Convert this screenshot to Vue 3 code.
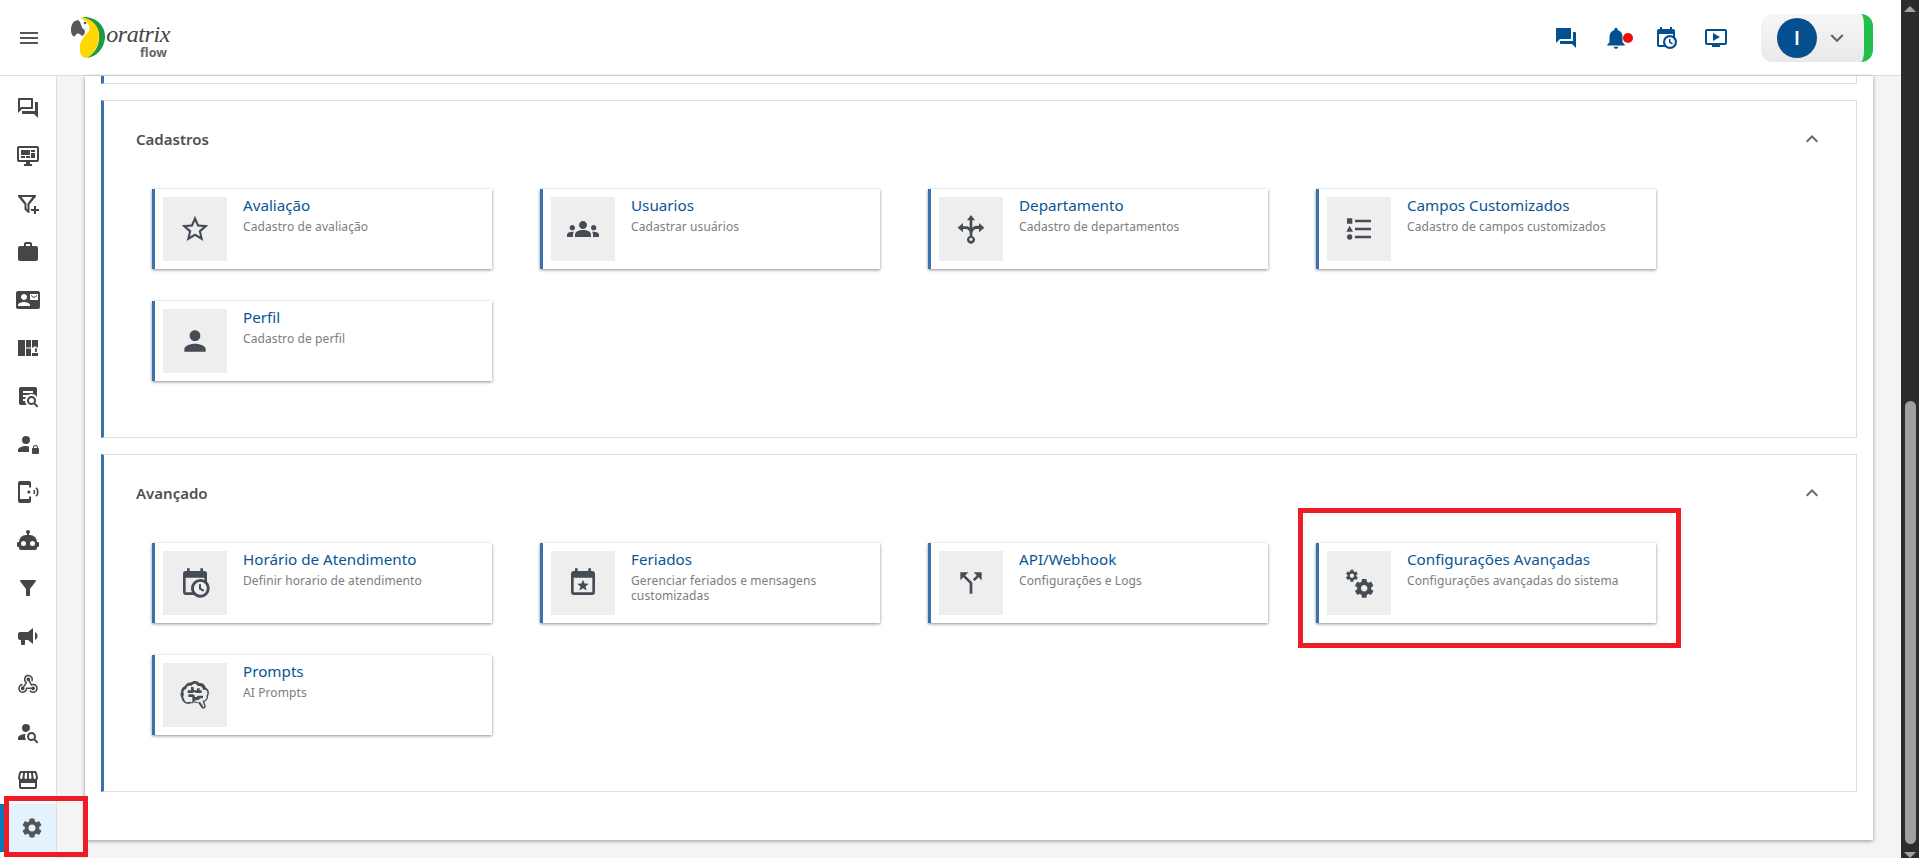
<script setup>
const P = {
  menu: 'M3 18h18v-2H3v2zm0-5h18v-2H3v2zm0-7v2h18V6H3z',
  qaOut: 'M15 4v7H5.17l-.59.59-.58.58V4h11m1-2H3c-.55 0-1 .45-1 1v14l4-4h10c.55 0 1-.45 1-1V3c0-.55-.45-1-1-1zm5 4h-2v9H6v2c0 .55.45 1 1 1h11l4 4V7c0-.55-.45-1-1-1z',
  qa: 'M21 6h-2v9H6v2c0 .55.45 1 1 1h11l4 4V7c0-.55-.45-1-1-1zm-4 6V3c0-.55-.45-1-1-1H3c-.55 0-1 .45-1 1v14l4-4h10c.55 0 1-.45 1-1z',
  monitor: 'M21,16V4H3V16H21M21,2A2,2 0 0,1 23,4V16A2,2 0 0,1 21,18H14V20H16V22H8V20H10V18H3C1.89,18 1,17.1 1,16V4C1,2.89 1.89,2 3,2H21M5,6H14V11H5V6M15,6H19V8H15V6M19,9V14H15V9H19M5,12H9V14H5V12M10,12H14V14H10V12Z',
  filterPlus: 'M2 3h18v1.6L13.5 12.4V21l-1.6-.2-3.4-3.4V12.4L2 4.6V3zm3.6 2 4.9 6.4v5.2l1 1v-6.2L16.4 5H5.6zM15 17h3v-3h2v3h3v2h-3v3h-2v-3h-3v-2z',
  work: 'M20 6h-4V4c0-1.11-.89-2-2-2h-4c-1.11 0-2 .89-2 2v2H4c-1.11 0-1.99.89-1.99 2L2 19c0 1.11.89 2 2 2h16c1.11 0 2-.89 2-2V8c0-1.11-.89-2-2-2zm-6 0h-4V4h4v2z',
  contact: 'M21 8V7l-3 2-3-2v1l3 2 3-2zm1-5H2C.9 3 0 3.9 0 5v14c0 1.1.9 2 2 2h20c1.1 0 1.99-.9 1.99-2L24 5c0-1.1-.9-2-2-2zM8 6c1.66 0 3 1.34 3 3s-1.34 3-3 3-3-1.34-3-3 1.34-3 3-3zm6 12H2v-1c0-2 4-3.1 6-3.1s6 1.1 6 3.1v1zm8-6h-8V6h8v6z',
  quilt: 'M2 4h7v16H2V4zm8 0h5v7.5h-5V4zm6 0h6v7.5h-1.5l-.2-1h-2.6l-.2 1H16V4zm-6 8.5h5V20h-5v-7.5zm8.9 0h2.2l-.3 3.5h-1.6l-.3-3.5zM16 17h6v3h-6v-3z',
  docSearch: 'M15.5,12C18,12 20,14 20,16.5C20,17.38 19.75,18.21 19.31,18.9L22.39,22L21,23.39L17.88,20.32C17.19,20.75 16.37,21 15.5,21C13,21 11,19 11,16.5C11,14 13,12 15.5,12M15.5,14A2.5,2.5 0 0,0 13,16.5A2.5,2.5 0 0,0 15.5,19A2.5,2.5 0 0,0 18,16.5A2.5,2.5 0 0,0 15.5,14M7,15V17H9C9.14,18.55 9.8,19.94 10.81,21H5C3.89,21 3,20.1 3,19V5C3,3.89 3.89,3 5,3H19A2,2 0 0,1 21,5V13.03C19.85,11.21 17.82,10 15.5,10C14.23,10 13.04,10.37 12.04,11H7V13H10C9.64,13.6 9.34,14.28 9.17,15H7M17,9V7H7V9H17Z',
  accLock: 'M10 4a4 4 0 1 1 0 8 4 4 0 0 1 0-8zM10 14c-4.42 0-8 1.79-8 4v2h11v-5.5c-.9-.3-1.9-.5-3-.5zM22 16v-.5a2.5 2.5 0 0 0-5 0v.5c-.55 0-1 .45-1 1v4c0 .55.45 1 1 1h5c.55 0 1-.45 1-1v-4c0-.55-.45-1-1-1zm-1 0h-3v-.5a1.5 1.5 0 0 1 3 0v.5z',
  phone: 'M20.6 7.2l-1.1 1.1c2 2 2 5.3 0 7.4l1.1 1.1c2.7-2.6 2.7-7 0-9.6zM18.2 9.6l-1.1 1.1c.7.7.7 1.9 0 2.6l1.1 1.1c1.4-1.3 1.4-3.5 0-4.8zM14.5 12a1.6 1.6 0 1 1-3.2 0 1.6 1.6 0 0 1 3.2 0zM13 1H4C2.9 1 2 1.9 2 3v18c0 1.1.9 2 2 2h9c1.1 0 2-.9 2-2v-4.5h-2V19H4V5h9v2.5h2V3c0-1.1-.9-2-2-2z',
  robot: 'M12,2A2,2 0 0,1 14,4C14,4.74 13.6,5.39 13,5.73V7H14A7,7 0 0,1 21,14H22A1,1 0 0,1 23,15V18A1,1 0 0,1 22,19H21V20A2,2 0 0,1 19,22H5A2,2 0 0,1 3,20V19H2A1,1 0 0,1 1,18V15A1,1 0 0,1 2,14H3A7,7 0 0,1 10,7H11V5.73C10.4,5.39 10,4.74 10,4A2,2 0 0,1 12,2M7.5,13A2.5,2.5 0 0,0 5,15.5A2.5,2.5 0 0,0 7.5,18A2.5,2.5 0 0,0 10,15.5A2.5,2.5 0 0,0 7.5,13M16.5,13A2.5,2.5 0 0,0 14,15.5A2.5,2.5 0 0,0 16.5,18A2.5,2.5 0 0,0 19,15.5A2.5,2.5 0 0,0 16.5,13Z',
  filter: 'M4.25 5.61C6.27 8.2 10 13 10 13v6c0 .55.45 1 1 1h2c.55 0 1-.45 1-1v-6s3.72-4.8 5.74-7.39c.51-.66.04-1.61-.79-1.61H5.04c-.83 0-1.3.95-.79 1.61z',
  bullhorn: 'M12,8H4A2,2 0 0,0 2,10V14A2,2 0 0,0 4,16H5V20A1,1 0 0,0 6,21H8A1,1 0 0,0 9,20V16H12L17,20V4L12,8M21.5,12C21.5,13.71 20.54,15.26 19,16V8C20.53,8.75 21.5,10.3 21.5,12Z',
  webhook: 'M10.46,19C9,21.07 6.15,21.59 4.09,20.15C2.04,18.71 1.56,15.84 3,13.75C3.87,12.5 5.21,11.83 6.58,11.77L6.63,13.2C5.72,13.27 4.84,13.74 4.27,14.56C3.27,16 3.58,17.94 4.95,18.91C6.33,19.87 8.26,19.5 9.26,18.07C9.57,17.62 9.75,17.13 9.82,16.63V15.62L15.4,15.58L15.47,15.47C16,14.55 17.15,14.23 18.05,14.75C18.95,15.27 19.26,16.43 18.73,17.35C18.2,18.26 17.04,18.58 16.14,18.06C15.73,17.83 15.44,17.46 15.31,17.04L11.24,17.06C11.13,17.73 10.87,18.39 10.46,19M17.74,11.86C20.27,12.17 22.07,14.44 21.76,16.93C21.45,19.43 19.15,21.2 16.62,20.89C15.13,20.71 13.9,19.86 13.19,18.68L14.43,17.96C14.92,18.73 15.75,19.28 16.75,19.41C18.5,19.62 20.05,18.43 20.26,16.76C20.47,15.09 19.23,13.56 17.5,13.35C16.96,13.29 16.44,13.36 15.97,13.53L15.12,13.97L12.54,9.2H12.32C11.26,9.16 10.44,8.29 10.47,7.25C10.5,6.21 11.4,5.4 12.45,5.44C13.5,5.5 14.32,6.37 14.28,7.41C14.26,7.85 14.09,8.25 13.82,8.56L15.71,12.05C16.31,11.85 17,11.79 17.74,11.86M8.25,9.14C7.25,6.79 8.31,4.1 10.62,3.12C12.94,2.14 15.62,3.25 16.62,5.6C17.21,6.97 17.09,8.47 16.42,9.67L15.18,8.95C15.6,8.14 15.67,7.15 15.27,6.22C14.59,4.62 12.78,3.85 11.23,4.5C9.67,5.16 8.97,7 9.65,8.6C9.93,9.26 10.4,9.77 10.97,10.11L11.36,10.32L8.29,15.31C8.32,15.36 8.36,15.42 8.39,15.5C8.88,16.41 8.54,17.56 7.62,18.05C6.71,18.54 5.56,18.18 5.06,17.24C4.57,16.31 4.91,15.16 5.83,14.67C6.22,14.46 6.65,14.41 7.06,14.5L9.37,10.73C8.9,10.3 8.5,9.76 8.25,9.14Z',
  accSearch: 'M15.5,12C18,12 20,14 20,16.5C20,17.38 19.75,18.2 19.31,18.9L22.39,22L21,23.39L17.88,20.32C17.19,20.75 16.37,21 15.5,21C13,21 11,19 11,16.5C11,14 13,12 15.5,12M15.5,14A2.5,2.5 0 0,0 13,16.5A2.5,2.5 0 0,0 15.5,19A2.5,2.5 0 0,0 18,16.5A2.5,2.5 0 0,0 15.5,14M10,4A4,4 0 0,1 14,8C14,8.91 13.69,9.75 13.18,10.43C12.32,10.75 11.55,11.26 10.91,11.9L10,12A4,4 0 0,1 6,8A4,4 0 0,1 10,4M2,20V18C2,15.88 5.31,14.14 9.5,14C9.18,14.78 9,15.62 9,16.5C9,17.79 9.38,19 10,20H2Z',
  store: 'M21.9 8.89l-1.05-4.37c-.22-.9-1-1.52-1.91-1.52H5.05c-.9 0-1.69.63-1.9 1.52L2.1 8.89c-.24 1.02-.02 2.06.62 2.88.08.11.19.19.28.29V19c0 1.1.9 2 2 2h14c1.1 0 2-.9 2-2v-6.94c.09-.09.2-.18.28-.28.64-.82.87-1.87.62-2.89zm-2.99-3.9l1.05 4.37c.1.42.01.84-.25 1.17-.14.18-.44.47-.94.47-.61 0-1.14-.49-1.21-1.14L16.98 5l1.93-.01zM13 5h1.96l.54 4.52c.05.39-.07.78-.33 1.07-.22.26-.54.41-.95.41-.67 0-1.22-.59-1.22-1.31V5zM8.49 9.52L9.04 5H11v4.69c0 .72-.55 1.31-1.29 1.31-.34 0-.65-.15-.89-.41-.25-.29-.37-.68-.33-1.07zm-4.45-.16L5.05 5h1.97l-.58 4.86c-.08.65-.6 1.14-1.21 1.14-.49 0-.8-.29-.93-.47-.27-.32-.36-.75-.26-1.17zM5 15h14v4H5z',
  settings: 'M19.14 12.94c.04-.3.06-.61.06-.94 0-.32-.02-.64-.07-.94l2.03-1.58c.18-.14.23-.41.12-.61l-1.92-3.32c-.12-.22-.37-.29-.59-.22l-2.39.96c-.5-.38-1.03-.7-1.62-.94l-.36-2.54c-.04-.24-.24-.41-.48-.41h-3.84c-.24 0-.43.17-.47.41l-.36 2.54c-.59.24-1.13.57-1.62.94l-2.39-.96c-.22-.08-.47 0-.59.22L2.74 8.87c-.12.21-.08.47.12.61l2.03 1.58c-.05.3-.09.63-.09.94s.02.64.07.94l-2.03 1.58c-.18.14-.23.41-.12.61l1.92 3.32c.12.22.37.29.59.22l2.39-.96c.5.38 1.03.7 1.62.94l.36 2.54c.05.24.24.41.48.41h3.84c.24 0 .44-.17.47-.41l.36-2.54c.59-.24 1.13-.56 1.62-.94l2.39.96c.22.08.47 0 .59-.22l1.92-3.32c.12-.22.07-.47-.12-.61l-2.01-1.58zM12 15.6c-1.98 0-3.6-1.62-3.6-3.6s1.62-3.6 3.6-3.6 3.6 1.62 3.6 3.6-1.62 3.6-3.6 3.6z',
  star: 'M22 9.24l-7.19-.62L12 2 9.19 8.63 2 9.24l5.46 4.73L5.82 21 12 17.27 18.18 21l-1.63-7.03L22 9.24zM12 15.4l-3.76 2.27 1-4.28-3.32-2.88 4.38-.38L12 6.1l1.71 4.04 4.38.38-3.32 2.88 1 4.28L12 15.4z',
  groups: 'M12 12.75c1.63 0 3.07.39 4.24.9 1.08.48 1.76 1.56 1.76 2.73V18H6v-1.61c0-1.18.68-2.26 1.76-2.73 1.17-.52 2.61-.91 4.24-.91zM4 13c1.1 0 2-.9 2-2s-.9-2-2-2-2 .9-2 2 .9 2 2 2zm1.13 1.1c-.37-.06-.74-.1-1.13-.1-.99 0-1.93.21-2.78.58C.48 14.9 0 15.62 0 16.43V18h4.5v-1.61c0-.83.23-1.61.63-2.29zM20 13c1.1 0 2-.9 2-2s-.9-2-2-2-2 .9-2 2 .9 2 2 2zm4 3.43c0-.81-.48-1.53-1.22-1.85-.85-.37-1.79-.58-2.78-.58-.39 0-.76.04-1.13.1.4.68.63 1.46.63 2.29V18H24v-1.57zM12 6c1.66 0 3 1.34 3 3s-1.34 3-3 3-3-1.34-3-3 1.34-3 3-3z',
  person: 'M12 12c2.21 0 4-1.79 4-4s-1.79-4-4-4-4 1.79-4 4 1.79 4 4 4zm0 2c-2.67 0-8 1.34-8 4v2h16v-2c0-2.66-5.33-4-8-4z',
  arrows: 'M12 1.500l3 4h-2v5.700c.7-1 1.800-1.700 3.200-1.700H18V7.500l4 3.500-4 3.500v-2.500h-1.800c-1.800 0-3.200 1.500-3.200 3.500v1.700a3 3 0 1 1-2 0V15c0-1.700-1.300-3-3-3H6v2.500L2 11l4-3.500V10h2c1.100 0 2.200.4 3 1V5.500H9l3-4zm0 17a1.250 1.250 0 1 0 0 2.500 1.250 1.250 0 0 0 0-2.500z',
  typeList: 'M5,9.5L7.5,14H2.5L5,9.5M3,4H7V8H3V4M5,20A2,2 0 0,0 7,18A2,2 0 0,0 5,16A2,2 0 0,0 3,18A2,2 0 0,0 5,20M9,5V7H21V5H9M9,19H21V17H9V19M9,13H21V11H9V13Z',
  calClock: 'M15,13H16.5V15.82L18.94,17.23L18.19,18.53L15,16.69V13M19,8H5V19H9.67C9.24,18.09 9,17.07 9,16A7,7 0 0,1 16,9C17.07,9 18.09,9.24 19,9.67V8M5,21C3.89,21 3,20.1 3,19V5C3,3.89 3.89,3 5,3H6V1H8V3H16V1H18V3H19A2,2 0 0,1 21,5V11.1C22.24,12.36 23,14.09 23,16A7,7 0 0,1 16,23C14.09,23 12.36,22.24 11.1,21H5M16,11.15A4.85,4.85 0 0,0 11.15,16C11.15,18.68 13.32,20.85 16,20.85A4.85,4.85 0 0,0 20.85,16C20.85,13.32 18.68,11.15 16,11.15Z',
  calStar: 'M19 3h-1V1h-2v2H8V1H6v2H5c-1.100 0-2 .9-2 2v14c0 1.100.9 2 2 2h14c1.100 0 2-.9 2-2V5c0-1.100-.9-2-2-2zm0 16H5V8h14v11zM12 9.500l1.200 2.900 3.100.2-2.400 2 .8 3-2.700-1.600-2.700 1.600.8-3-2.400-2 3.100-.2z',
  split: 'M14 4l2.290 2.290-2.880 2.880 1.420 1.420 2.880-2.880L20 10V4zm-4 0H4v6l2.290-2.290 4.710 4.700V20h2v-8.410l-5.290-5.300z',
  cogs: 'M15.9,18.45C17.25,18.45 18.35,17.35 18.35,16C18.35,14.65 17.25,13.55 15.9,13.55C14.54,13.55 13.45,14.65 13.45,16C13.45,17.35 14.54,18.45 15.9,18.45M21.1,16.68L22.58,17.84C22.71,17.95 22.75,18.13 22.66,18.29L21.26,20.71C21.17,20.86 21,20.92 20.83,20.86L19.09,20.16C18.73,20.44 18.34,20.67 17.91,20.85L17.64,22.7C17.61,22.87 17.47,23 17.3,23H14.5C14.32,23 14.18,22.87 14.15,22.7L13.89,20.85C13.46,20.67 13.07,20.44 12.71,20.16L10.96,20.86C10.81,20.92 10.62,20.86 10.54,20.71L9.14,18.29C9.05,18.13 9.09,17.95 9.22,17.84L10.7,16.68L10.65,16L10.7,15.31L9.22,14.16C9.09,14.05 9.05,13.86 9.14,13.71L10.54,11.29C10.62,11.13 10.81,11.07 10.96,11.13L12.71,11.84C13.07,11.56 13.46,11.32 13.89,11.15L14.15,9.29C14.18,9.13 14.32,9 14.5,9H17.3C17.47,9 17.61,9.13 17.64,9.29L17.91,11.15C18.34,11.32 18.73,11.56 19.09,11.84L20.83,11.13C21,11.07 21.17,11.13 21.26,11.29L22.66,13.71C22.75,13.86 22.71,14.05 22.58,14.16L21.1,15.31L21.15,16L21.1,16.68M6.69,8.07C7.56,8.07 8.26,7.37 8.26,6.5C8.26,5.63 7.56,4.92 6.69,4.92A1.58,1.58 0 0,0 5.11,6.5C5.11,7.37 5.82,8.07 6.69,8.07M10.03,6.94L11,7.68C11.07,7.75 11.09,7.87 11.03,7.97L10.13,9.53C10.08,9.63 9.96,9.67 9.86,9.63L8.74,9.18L8,9.62L7.81,10.81C7.79,10.92 7.7,11 7.59,11H5.79C5.67,11 5.58,10.92 5.56,10.81L5.4,9.62L4.64,9.18L3.5,9.63C3.41,9.67 3.3,9.63 3.24,9.53L2.34,7.97C2.28,7.87 2.31,7.75 2.39,7.68L3.34,6.94L3.31,6.5L3.34,6.06L2.39,5.32C2.31,5.25 2.28,5.13 2.34,5.03L3.24,3.47C3.3,3.37 3.41,3.33 3.5,3.37L4.63,3.82L5.4,3.38L5.56,2.19C5.58,2.08 5.67,2 5.79,2H7.59C7.7,2 7.79,2.08 7.81,2.19L8,3.38L8.74,3.82L9.86,3.37C9.96,3.33 10.08,3.37 10.13,3.47L11.03,5.03C11.09,5.13 11.07,5.25 11,5.32L10.03,6.06L10.06,6.5L10.03,6.94Z',
  brain: 'M12 1.500c1.400 0 2.600.6 3.300 1.600 2.300-.3 4.300 1.200 4.700 3.300 1.900.9 2.900 2.900 2.300 5-.1.4-.3.8-.5 1.100.2 2-1 3.800-2.800 4.500l1 3.200c.2.700-.1 1.400-.8 1.700l-.6.200c-.6.200-1.300 0-1.700-.6l-2.300-3.300c-.9.200-1.900 0-2.700-.5-.9.500-2 .7-3 .4-.9.500-2 .7-3 .5C3.700 17.900 2 16.200 1.900 14c-.9-1.300-1-3-.3-4.400C1.500 7.700 2.700 6 4.400 5.300 5.200 3.500 7 2.500 8.900 2.700c.8-.8 1.900-1.200 3.100-1.200zm0 2c-.9 0-1.700.4-2.200 1.100l-.4.500-.6-.1c-1.500-.3-2.900.6-3.300 2l-.2.500-.5.200C3.500 8.200 2.800 9.400 3.600 11l.2.500-.3.500c-.5.900-.4 2 .3 2.800l.2.300v.3c.1 1.200 1.200 2.100 2.500 2 .8 0 1.500-.4 2.100-.4.700.5 1.700.5 2.500 0l.9-.5.800.6c.6.500 1.500.6 2.200.3l.7-.3 2.800 4 .6-.2-1.400-4.400.9-.3c1.500-.4 2.400-1.800 2.100-3.300l-.1-.5.300-.4c.9-1.400.4-3.200-1-4L18 8.200l-.1-.6c-.2-1.500-1.600-2.600-3.200-2.400l-.7.1-.4-.6c-.3-.7-1.000-1.200-1.600-1.200zM9 6h2v1.500c0 .6.400 1 1 1h1.500V7h2v1.500h1.500v2h-3.500c-.8 0-1.500-.3-2-.8-.5.500-1.200.8-2 .8H6.500v-2H9V6zm-2 5.500h3c1.100 0 2 .9 2 2h1.500c0-.6.400-1 1-1H18v2h-2.200c-.3.900-1.100 1.500-2.300 1.500H12v1.500h-2v-3.500c0-.3-.2-.5-.5-.5H7v-2z'
}

const side = ['qaOut','monitor','filterPlus','work','contact','quilt','docSearch','accLock','phone','robot','filter','bullhorn','webhook','accSearch','store','settings']

const sections = [
  { title: 'Cadastros', cards: [
    { i: 'star', t: 'Avaliação', s: 'Cadastro de avaliação' },
    { i: 'groups', t: 'Usuarios', s: 'Cadastrar usuários' },
    { i: 'arrows', t: 'Departamento', s: 'Cadastro de departamentos' },
    { i: 'typeList', t: 'Campos Customizados', s: 'Cadastro de campos customizados' },
    { i: 'person', t: 'Perfil', s: 'Cadastro de perfil' }
  ]},
  { title: 'Avançado', cards: [
    { i: 'calClock', t: 'Horário de Atendimento', s: 'Definir horario de atendimento' },
    { i: 'calStar', t: 'Feriados', s: 'Gerenciar feriados e mensagens customizadas' },
    { i: 'split', t: 'API/Webhook', s: 'Configurações e Logs' },
    { i: 'cogs', t: 'Configurações Avançadas', s: 'Configurações avançadas do sistema' },
    { i: 'brain', t: 'Prompts', s: 'AI Prompts' }
  ]}
]
</script>

<template>
  <div class="app">
    <div class="page">
      <header class="top">
        <svg class="ico menu" viewBox="0 0 24 24"><path :d="P.menu" /></svg>
        <div class="logo">
          <svg class="parrot" viewBox="0 0 36 43">
            <path fill="#1d9a3f" d="M12 1C26 0 36 10 35 22 34 33 26 41 17 42c10-6 13-16 12-24C28 10 22 4 12 1z" />
            <path fill="#ffd800" d="M10 1.500C22 2 29.500 10 29 20c-.5 10-5 18-12 22-6 0-8-6-7-13 1-5 4-8 7-12 3-5-1-12-7-15.500z" />
            <path fill="#fff" d="M8 3.500C14 2.500 19 7 19.500 12c0 3-1.500 4.500-3 6L12 12z" />
            <path fill="#55585c" d="M1 14C1 7 5 3.500 9 4.500c2 3 2.500 6 3.500 8 3.500.5 3 6.500-.5 7.500-2.500-3-5.500-3.500-6.500-.5C4 22 1 19 1 14z" />
            <circle cx="15" cy="7" r="1.300" fill="#3a5fa8" />
          </svg>
          <div class="wordmark">
            <span class="oratrix">oratrix</span>
            <span class="flow">flow</span>
          </div>
        </div>
        <div class="top-right">
          <div class="top-icons">
            <svg class="ico blue" viewBox="0 0 24 24"><path :d="P.qa" /></svg>
            <span class="bell">
              <svg class="ico blue" viewBox="0 0 24 24"><path d="M12 22c1.100 0 2-.9 2-2h-4c0 1.100.89 2 2 2zm6-6v-5c0-3.070-1.640-5.640-4.500-6.320V4c0-.83-.67-1.500-1.500-1.500s-1.500.67-1.500 1.500v.68C7.630 5.360 6 7.920 6 11v5l-2 2v1h16v-1l-2-2z" /></svg>
              <i class="dot"></i>
            </span>
            <svg class="ico blue" viewBox="0 0 24 24"><path :d="P.calClock" /></svg>
            <svg class="ico blue" viewBox="0 0 24 24"><path d="M21 3H3c-1.110 0-2 .89-2 2v12c0 1.100.89 2 2 2h5v2h8v-2h5c1.100 0 1.990-.9 1.990-2L23 5c0-1.110-.9-2-2-2zm0 14H3V5h18v12zm-5-6l-7 4V7z" /></svg>
          </div>
          <div class="user">
            <span class="avatar">I</span>
            <svg class="chev" viewBox="0 0 24 24"><path d="M7.410 8.590 12 13.170l4.590-4.580L18 10l-6 6-6-6z" /></svg>
          </div>
        </div>
      </header>

      <div class="body">
        <nav class="side">
          <div v-for="(n, k) in side" :key="n" class="side-item" :class="{ active: k === side.length - 1 }">
            <svg class="ico" viewBox="0 0 24 24"><path :d="P[n]" fill-rule="evenodd" /></svg>
          </div>
        </nav>
        <main class="main">
          <div class="panel">
            <div class="stub"></div>
            <section v-for="sec in sections" :key="sec.title" class="section">
              <div class="sec-head">
                <h2>{{ sec.title }}</h2>
                <svg class="chev-up" viewBox="0 0 24 24"><path d="M12 8l-6 6 1.410 1.410L12 10.830l4.590 4.580L18 14z" /></svg>
              </div>
              <div class="grid">
                <article v-for="c in sec.cards" :key="c.t" class="card">
                  <div class="thumb">
                    <svg class="ico" viewBox="0 0 24 24"><path :d="P[c.i]" fill-rule="evenodd" /></svg>
                  </div>
                  <div class="txt">
                    <h3>{{ c.t }}</h3>
                    <p>{{ c.s }}</p>
                  </div>
                </article>
              </div>
            </section>
          </div>
        </main>
      </div>
    </div>

    <aside class="bar">
      <i class="arrow up"></i>
      <div class="track"><div class="thumb-bar"></div></div>
      <i class="arrow down"></i>
    </aside>

    <div class="mark mark-side"></div>
    <div class="mark mark-card"></div>
  </div>
</template>

<style>
html, body { margin: 0; overflow: hidden; }
</style>

<style scoped>
.app { position: relative; display: flex; width: 1919px; height: 858px; overflow: hidden; font-family: "Noto Sans", Lato, sans-serif; background: #f4f4f4; }
.page { width: 1901px; display: flex; flex-direction: column; }
.ico { width: 24px; height: 24px; fill: #464646; display: block; flex: none; }
.ico.blue { fill: #034f90; }

.top { height: 76px; box-sizing: border-box; background: #fff; border-bottom: 1px solid #dedede; display: flex; align-items: center; padding: 0 28px 0 17px; }
.menu { fill: #555; }
.logo { display: flex; align-items: flex-start; margin-left: 29px; height: 44px; }
.parrot { width: 36px; height: 43px; display: block; flex: none; }
.wordmark { display: flex; flex-direction: column; align-items: flex-end; width: 64px; padding-top: 6px; }
.oratrix { font: italic 400 24px/25px "Liberation Serif", serif; color: #444; letter-spacing: -.4px; }
.flow { font: 700 12.500px/13px "Noto Sans", sans-serif; color: #666; margin-top: -1px; margin-right: 3px; }
.top-right { margin-left: auto; display: flex; align-items: center; }
.top-icons { display: flex; align-items: center; gap: 26px; margin-right: 33px; }
.bell { position: relative; display: block; }
.bell .ico { width: 26px; height: 26px; margin: -1px; }
.dot { position: absolute; width: 10px; height: 10px; border-radius: 50%; background: #f50a0a; right: -5px; top: 7px; }
.user { width: 112px; height: 48px; box-sizing: border-box; border-radius: 12px; border-right: 9px solid #22c04b; background: linear-gradient(#f6f6f6, #e9e9e9); display: flex; align-items: center; padding-left: 16px; }
.avatar { width: 40px; height: 40px; border-radius: 50%; background: #064f8f; color: #fff; display: flex; align-items: center; justify-content: center; font: 700 18px Lato, sans-serif; }
.chev { width: 26px; height: 26px; fill: #666; margin-left: 7px; }

.body { flex: 1; display: flex; min-height: 0; }
.side { width: 57px; box-sizing: border-box; flex: none; background: #fff; border-right: 1px solid #dedede; padding-top: 8px; }
.side-item { height: 48px; display: flex; align-items: center; justify-content: center; box-sizing: border-box; }
.side-item.active { background: #e3f2fd; box-shadow: inset 4px 0 0 #0a78b4; padding-left: 8px; }
.side-item.active .ico { fill: #555; }

.main { flex: 1; padding: 0 28px 18px; min-width: 0; }
.panel { height: 764px; background: #fff; padding: 0 16px; box-shadow: 0 1px 4px rgba(0,0,0,.4); }
.stub { height: 8px; box-sizing: border-box; border: 1px solid #e0e0e0; border-width: 0 1px 1px 0; border-left: 3px solid #3b70b0; }
.section { margin-top: 16px; height: 338px; box-sizing: border-box; border: 1px solid #e0e0e0; border-left: 3px solid #3b70b0; }
.sec-head { height: 76px; display: flex; align-items: center; justify-content: space-between; padding: 0 32px; }
h2 { margin: 0; font-size: 15px; font-weight: 600; color: #505050; }
.chev-up { width: 24px; height: 24px; fill: #666; }
.grid { display: grid; grid-template-columns: repeat(4, 340px); column-gap: 48px; row-gap: 32px; padding: 12px 0 0 48px; }
.card { height: 80px; box-sizing: border-box; display: flex; padding: 8px; border-left: 3px solid #3b70b0; background: #fff; box-shadow: 0 1px 3px rgba(0,0,0,.45); }
.thumb { width: 64px; height: 64px; background: #eee; display: flex; align-items: center; justify-content: center; flex: none; }
.thumb .ico { width: 32px; height: 32px; fill: #454c55; }
.txt { margin-left: 16px; min-width: 0; }
h3 { margin: -2px 0 0; font-size: 15.200px; line-height: 20px; font-weight: 400; color: #0a5596; }
p { margin: 4px 0 0; font-size: 12px; line-height: 15px; color: #7d7d7d; letter-spacing: .1px; }

.bar { width: 18px; height: 858px; background: #2b2b2b; display: flex; flex-direction: column; align-items: center; flex: none; }
.arrow { display: block; width: 0; height: 0; border-left: 6px solid transparent; border-right: 6px solid transparent; }
.arrow.up { border-bottom: 6px solid #a3a3a3; margin-top: 6px; }
.arrow.down { border-top: 6px solid #a3a3a3; margin-bottom: 0; }
.track { flex: 1; width: 11px; display: flex; flex-direction: column; justify-content: flex-end; padding-bottom: 8px; }
.thumb-bar { height: 443px; border-radius: 6px; background: #9f9f9f; }

.mark { position: absolute; box-sizing: border-box; border: 5px solid #ee1c25; pointer-events: none; }
.mark-side { left: 4px; top: 796px; width: 84px; height: 61px; }
.mark-card { left: 1298px; top: 508px; width: 383px; height: 140px; }
</style>
